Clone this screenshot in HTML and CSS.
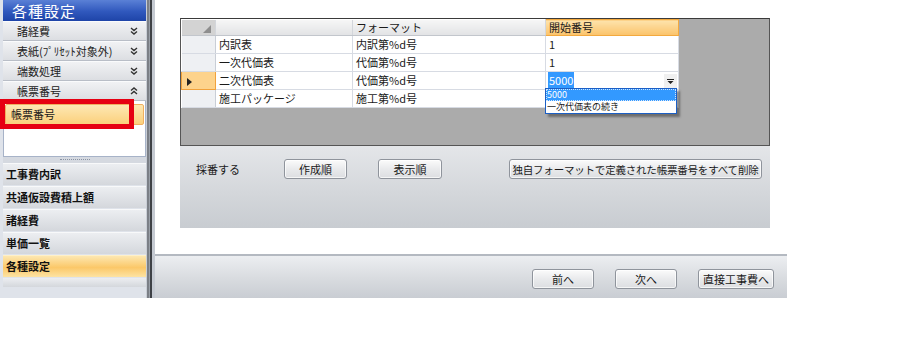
FILE: index.html
```html
<!DOCTYPE html>
<html lang="ja">
<head>
    <meta charset="UTF-8">
    <meta name="viewport" content="width=device-width, initial-scale=1.0">
    <title>各種設定 - 帳票番号</title>
    <link rel="stylesheet" href="styles.css">
</head>
<body>
<div class="app">
    <aside class="sidebar">
        <div class="sidebar-title">各種設定</div>

        <div class="acc-item">
            <span>諸経費</span>
            <svg class="chev" width="8" height="8" viewBox="0 0 8 8"><path d="M1 1l3 2.5 3-2.5M1 4.5l3 2.5 3-2.5"/></svg>
        </div>
        <div class="acc-item">
            <span>表紙(ﾌﾟﾘｾｯﾄ対象外)</span>
            <svg class="chev" width="8" height="8" viewBox="0 0 8 8"><path d="M1 1l3 2.5 3-2.5M1 4.5l3 2.5 3-2.5"/></svg>
        </div>
        <div class="acc-item">
            <span>端数処理</span>
            <svg class="chev" width="8" height="8" viewBox="0 0 8 8"><path d="M1 1l3 2.5 3-2.5M1 4.5l3 2.5 3-2.5"/></svg>
        </div>
        <div class="acc-item">
            <span>帳票番号</span>
            <svg class="chev" width="8" height="8" viewBox="0 0 8 8"><path d="M1 3.5l3-2.5 3 2.5M1 7l3-2.5 3 2.5"/></svg>
        </div>
        <div class="acc-panel">
            <div class="acc-link selected">帳票番号</div>
        </div>
        <div class="grip"><span></span></div>

        <div class="nav-item">工事費内訳</div>
        <div class="nav-item">共通仮設費積上額</div>
        <div class="nav-item">諸経費</div>
        <div class="nav-item">単価一覧</div>
        <div class="nav-item active">各種設定</div>
        <div class="nav-empty"></div>

        <div class="mark"></div>
    </aside>

    <div class="splitter"></div>

    <main class="main">
        <div class="content">
            <div class="grid">
                <table class="sheet">
                    <colgroup>
                        <col class="c-ind">
                        <col class="c-name">
                        <col class="c-fmt">
                        <col class="c-start">
                    </colgroup>
                    <thead>
                        <tr>
                            <th class="corner"><span class="corner-tri"></span></th>
                            <th></th>
                            <th>フォーマット</th>
                            <th class="sorted">開始番号</th>
                        </tr>
                    </thead>
                    <tbody>
                        <tr>
                            <td class="ind"></td>
                            <td>内訳表</td>
                            <td>内訳第%d号</td>
                            <td>1</td>
                        </tr>
                        <tr>
                            <td class="ind"></td>
                            <td>一次代価表</td>
                            <td>代価第%d号</td>
                            <td>1</td>
                        </tr>
                        <tr>
                            <td class="ind current"><span class="arrow"></span></td>
                            <td>二次代価表</td>
                            <td>代価第%d号</td>
                            <td class="editing">
                                <span class="sel-text">5000</span>
                                <span class="drop-btn">
                                    <svg width="7" height="5" viewBox="0 0 7 5"><path d="M0 0h7v1H0z M0.5 2h6L3.5 5z"/></svg>
                                </span>
                            </td>
                        </tr>
                        <tr>
                            <td class="ind"></td>
                            <td>施工パッケージ</td>
                            <td>施工第%d号</td>
                            <td></td>
                        </tr>
                    </tbody>
                </table>

                <div class="dropdown">
                    <div class="drop-opt hot">5000</div>
                    <div class="drop-opt">一次代価表の続き</div>
                </div>
            </div>

            <div class="options">
                <span class="opt-label">採番する</span>
                <button class="btn btn-create">作成順</button>
                <button class="btn btn-view">表示順</button>
                <button class="btn btn-wide">独自フォーマットで定義された帳票番号をすべて削除</button>
            </div>
        </div>

        <div class="footer">
            <button class="btn btn-nav">前へ</button>
            <button class="btn btn-nav">次へ</button>
            <button class="btn btn-direct">直接工事費へ</button>
        </div>
    </main>
</div>
</body>
</html>
```

FILE: styles.css
```css
body {
    margin: 0;
    background: #fff;
    font-family: "Noto Sans CJK JP", "DejaVu Sans", sans-serif;
    font-size: 11px;
    color: #1a1a1a;
}
.app {
    display: flex;
    width: 787px;
    height: 298px;
}

/* sidebar */
.sidebar {
    position: relative;
    width: 146px;
    box-sizing: border-box;
    padding-left: 3px;
    background: #dfe3ea;
    display: flex;
    flex-direction: column;
}
.sidebar-title {
    height: 21px;
    box-sizing: border-box;
    padding-left: 9px;
    background: linear-gradient(#5a80d6, #3058bd 55%, #1e44a8);
    color: #fff;
    font-size: 15px;
    line-height: 22px;
    letter-spacing: 1px;
}
.acc-item {
    height: 20px;
    box-sizing: border-box;
    display: flex;
    align-items: center;
    justify-content: space-between;
    padding: 0 8px 0 14px;
    border-top: 1px solid #fafbfc;
    border-bottom: 1px solid #b9bec7;
    background: linear-gradient(#f1f2f4, #dcdee2);
    font-size: 11px;
    color: #222;
}
.chev path {
    fill: none;
    stroke: #333;
    stroke-width: 1.4;
}
.acc-panel {
    height: 56px;
    box-sizing: border-box;
    padding: 3px 1px 0 1px;
    background: #fff;
    border: 1px solid #a7b3c8;
    border-top: none;
}
.acc-link {
    height: 19px;
    line-height: 19px;
    padding-left: 5px;
    font-size: 11px;
}
.acc-link.selected {
    background: linear-gradient(#fde8b4, #fbd07c);
    border: 1px solid #f0b060;
    border-radius: 2px;
}
.grip {
    height: 6px;
    display: flex;
    align-items: center;
    justify-content: center;
    background: #d5d9e0;
}
.grip span {
    width: 30px;
    height: 1px;
    border-top: 1px dotted #8a93a3;
}
.nav-item {
    height: 22px;
    margin-bottom: 1px;
    box-sizing: border-box;
    padding-left: 3px;
    line-height: 21px;
    font-weight: bold;
    font-size: 11px;
    color: #111;
    border-top: 1px solid #f8f9fa;
    background: linear-gradient(#eceef1, #d4d7dc);
}
.nav-item.active {
    border-top-color: #fff0c8;
    background: linear-gradient(#fde7b0, #fbc869 55%, #fde3a3);
}
.nav-empty {
    height: 9px;
    background: linear-gradient(#eceef1, #d4d7dc);
}
.mark {
    position: absolute;
    left: 0;
    top: 99px;
    width: 134px;
    height: 30px;
    box-sizing: border-box;
    border: 5px solid #e60012;
}

.splitter {
    width: 9px;
    background: linear-gradient(to right, #c9ced6 0, #c9ced6 1px, #7b7f86 1px, #7b7f86 3px, #9aa0a8 3px, #9aa0a8 4px, #3e4146 4px, #3e4146 6px, #c5cad2 6px);
}

/* main */
.main {
    flex: 1;
    display: flex;
    flex-direction: column;
}
.content {
    flex: 1;
    padding: 18px 17px 0 25px;
    background: #fff;
}
.grid {
    position: relative;
    height: 128px;
    box-sizing: border-box;
    background: #ababab;
    border: 1px solid #555;
    border-top-color: #3a3a3a;
}
.sheet {
    border-collapse: collapse;
    table-layout: fixed;
    width: 497px;
    background: #fff;
}
.c-ind { width: 34px; }
.c-name { width: 137px; }
.c-fmt { width: 193px; }
.c-start { width: 133px; }
.sheet th {
    height: 15px;
    padding: 0 3px;
    text-align: left;
    font-weight: normal;
    font-size: 11px;
    line-height: 15px;
    background: linear-gradient(#f6f6f6, #e2e3e5);
    border-right: 1px solid #d3d6db;
    border-bottom: 1px solid #c2c6cc;
}
.sheet th.corner {
    position: relative;
    background: #d3d3d3;
}
.corner-tri {
    position: absolute;
    right: 4px;
    bottom: 2px;
    width: 0;
    height: 0;
    border-left: 8px solid transparent;
    border-bottom: 8px solid #8e8e8e;
}
.sheet th.sorted {
    background: linear-gradient(#fde3ac, #fbc36a);
    border: 1px solid #f3a93e;
}
.sheet td {
    height: 17px;
    padding: 0 3px;
    line-height: 17px;
    font-size: 11px;
    white-space: nowrap;
    border-right: 1px solid #d7dbe3;
    border-bottom: 1px solid #d7dbe3;
}
.sheet td.ind {
    background: #eef0f3;
    border-right-color: #c9ced6;
}
.sheet td.current {
    background: #fdd38c;
    border: 1px solid #f1a23c;
}
.arrow {
    display: inline-block;
    margin-left: 2px;
    width: 0;
    height: 0;
    border-top: 4px solid transparent;
    border-bottom: 4px solid transparent;
    border-left: 5px solid #222;
    vertical-align: middle;
}
.sheet td.editing {
    position: relative;
    padding-left: 2px;
}
.sel-text {
    background: #3399ff;
    color: #fff;
    padding: 0 1px;
}
.drop-btn {
    position: absolute;
    right: 1px;
    top: 2px;
    width: 13px;
    height: 14px;
    display: flex;
    align-items: center;
    justify-content: center;
    background: #f0f0f0;
}
.drop-btn path {
    fill: #222;
}
.dropdown {
    position: absolute;
    left: 364px;
    top: 69px;
    width: 132px;
    box-sizing: border-box;
    background: #fff;
    border: 1px solid #1c5fc4;
    box-shadow: 3px 3px 2px rgba(60, 60, 60, 0.55);
    font-size: 9px;
}
.drop-opt {
    height: 12px;
    line-height: 12px;
    padding-left: 1px;
    white-space: nowrap;
}
.drop-opt.hot {
    background: #3399ff;
    color: #fff;
    outline: 1px dotted #cfe4ff;
    outline-offset: -1px;
}

.options {
    height: 82px;
    box-sizing: border-box;
    display: flex;
    align-items: flex-start;
    padding: 13px 0 0 16px;
    background: linear-gradient(#e4e6e9, #d3d6da 60%, #c8ccd1);
}
.opt-label {
    width: 88px;
    line-height: 20px;
    font-size: 11px;
}
.btn {
    height: 20px;
    padding: 0;
    box-sizing: border-box;
    font-family: inherit;
    font-size: 11px;
    white-space: nowrap;
    color: #1a1a1a;
    border: 1px solid #8f949c;
    border-radius: 3px;
    background: linear-gradient(#fbfbfb, #e9eaec 50%, #dcdee1);
    box-shadow: inset 0 0 0 1px rgba(255, 255, 255, 0.7);
}
.btn-create { width: 63px; }
.btn-view { width: 64px; margin-left: 31px; }
.btn-wide { width: 253px; margin-left: 67px; font-size: 10.5px; letter-spacing: -0.2px; }

.footer {
    height: 44px;
    box-sizing: border-box;
    display: flex;
    justify-content: flex-end;
    align-items: flex-start;
    gap: 21px;
    padding: 13px 13px 0 0;
    border-top: 2px solid #b4b9c1;
    background: linear-gradient(#eceef1, #d8dbdf 55%, #c9cdd3);
}
.btn-nav { width: 62px; }
.btn-direct { width: 76px; }
```
